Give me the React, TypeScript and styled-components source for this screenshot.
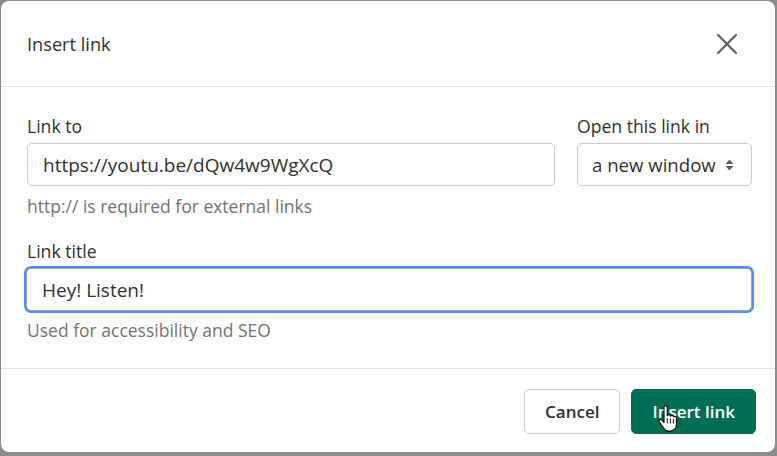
import React from "react";
import styled, { createGlobalStyle } from "styled-components";

const GlobalStyle = createGlobalStyle`
  html, body {
    margin: 0;
    padding: 0;
  }
  body {
    font-family: "Open Sans", "Noto Sans", sans-serif;
    color: #303030;
  }
`;

const Backdrop = styled.div`
  width: 777px;
  height: 456px;
  box-sizing: border-box;
  padding: 1px 2px 4px 1px;
  background: #8c8c8c;
  display: flex;
`;

const Modal = styled.div`
  flex: 1;
  background: #fff;
  border-radius: 8px;
  display: flex;
  flex-direction: column;
  overflow: hidden;
`;

const Header = styled.header`
  height: 85px;
  display: flex;
  align-items: center;
  justify-content: space-between;
  padding: 0 36px 0 26px;
  border-bottom: 1px solid #e1e3e5;
`;

const Title = styled.h2`
  margin: 0;
  font-size: 18.2px;
  font-weight: 400;
  color: #303030;
`;

const CloseButton = styled.button`
  border: 0;
  background: none;
  padding: 0;
  width: 24px;
  height: 24px;
  display: flex;
  align-items: center;
  justify-content: center;
  cursor: pointer;
`;

const Body = styled.div`
  padding: 27px 23px 26px 25px;
  display: flex;
  flex-direction: column;
  gap: 21px;
  border-bottom: 1px solid #e1e3e5;
`;

const Row = styled.div`
  display: flex;
  gap: 22px;
  padding-left: 1px;
`;

const Field = styled.div<{ $grow?: boolean; $width?: number }>`
  display: flex;
  flex-direction: column;
  flex: ${(p) => (p.$grow ? "1" : "none")};
  width: ${(p) => (p.$width ? `${p.$width}px` : "auto")};
`;

const Label = styled.label<{ $indent?: boolean }>`
  font-size: 17.6px;
  line-height: 24px;
  margin-bottom: 5px;
  padding-left: ${(p) => (p.$indent ? "1px" : "0")};
  color: #303030;
`;

const TextInput = styled.input<{ $focused?: boolean }>`
  box-sizing: border-box;
  height: 43px;
  width: 100%;
  padding: 0 15px;
  font-family: inherit;
  font-size: 19px;
  color: #303030;
  border: 1px solid ${(p) => (p.$focused ? "#a6a6a6" : "#c9cccf")};
  border-radius: 5px;
  background: #fff;
  outline: none;
  box-shadow: ${(p) => (p.$focused ? "0 0 0 2px #4d8ef8" : "none")};
`;

const SelectBox = styled.div`
  box-sizing: border-box;
  height: 43px;
  display: flex;
  align-items: center;
  gap: 9px;
  padding: 0 0 0 14px;
  border: 1px solid #c9cccf;
  border-radius: 5px;
  font-size: 18.6px;
  color: #303030;
`;

const Help = styled.div<{ $gap?: number }>`
  font-size: 17.5px;
  line-height: 24px;
  margin-top: ${(p) => p.$gap ?? 8}px;
  padding-left: 1px;
  color: #737373;
`;

const Footer = styled.footer`
  flex: 1;
  display: flex;
  justify-content: flex-end;
  align-items: flex-start;
  gap: 11px;
  padding: 20px 19px 0 0;
`;

const Button = styled.button<{ $primary?: boolean }>`
  position: relative;
  height: 45px;
  box-sizing: border-box;
  padding: 0 20px;
  font-family: inherit;
  font-size: 17px;
  font-weight: 600;
  border-radius: 5px;
  cursor: pointer;
  border: 1px solid ${(p) => (p.$primary ? "#006e52" : "#c9cccf")};
  background: ${(p) => (p.$primary ? "#006e52" : "#fff")};
  color: ${(p) => (p.$primary ? "#fff" : "#303030")};
`;

const Cursor = styled.svg`
  position: absolute;
  left: 26px;
  top: 15px;
  pointer-events: none;
`;

export default function App() {
  return (
    <>
      <GlobalStyle />
      <Backdrop>
        <Modal>
          <Header>
            <Title>Insert link</Title>
            <CloseButton aria-label="Close">
              <svg width="22" height="22" viewBox="0 0 22 22">
                <path d="M2 2 L20 20 M20 2 L2 20" stroke="#5c5f62" strokeWidth="2.2" strokeLinecap="round" />
              </svg>
            </CloseButton>
          </Header>
          <Body>
            <div>
              <Row>
                <Field $grow>
                  <Label>Link to</Label>
                  <TextInput defaultValue="https://youtu.be/dQw4w9WgXcQ" />
                </Field>
                <Field $width={175}>
                  <Label>Open this link in</Label>
                  <SelectBox>
                    a new window
                    <svg width="9" height="14" viewBox="0 0 9 14">
                      <path d="M4.5 1.5 L8.5 6 H0.5 Z M4.5 12.5 L8.5 8 H0.5 Z" fill="#5c5f62" />
                    </svg>
                  </SelectBox>
                </Field>
              </Row>
              <Help>http:// is required for external links</Help>
            </div>
            <Field>
              <Label $indent>Link title</Label>
              <TextInput $focused defaultValue="Hey! Listen!" />
              <Help $gap={7}>Used for accessibility and SEO</Help>
            </Field>
          </Body>
          <Footer>
            <Button>Cancel</Button>
            <Button $primary>
              Insert link
              <Cursor width="20" height="30" viewBox="0 0 20 30">
                <path
                  d="M6 2.5c0-1 .7-1.7 1.6-1.7s1.6.7 1.6 1.7v8.2c.3-.6.9-.9 1.6-.9.9 0 1.5.6 1.6 1.4.3-.5.8-.8 1.5-.8.9 0 1.5.6 1.6 1.4.3-.4.8-.6 1.3-.6 1 0 1.6.8 1.6 1.8v6.5c0 3.6-2.4 6.6-6 6.6h-1.6c-2 0-3.4-.8-4.6-2.3L1.3 17c-.6-.8-.5-1.8.2-2.3.7-.5 1.600-.4 2.3.3L6 17.4Z"
                  fill="#fff"
                  stroke="#000"
                  strokeWidth="1.1"
                  strokeLinejoin="round"
                />
                <path d="M9.3 13v5.5 M12.4 13.5v5 M15.4 14v4.5" stroke="#000" strokeWidth="0.9" />
              </Cursor>
            </Button>
          </Footer>
        </Modal>
      </Backdrop>
    </>
  );
}
